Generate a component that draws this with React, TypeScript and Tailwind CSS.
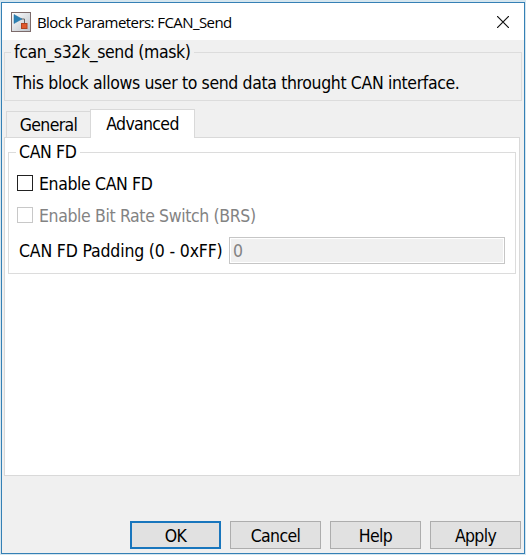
import type { ReactNode } from "react";

function BlockIcon() {
  return (
    <svg width="20" height="20" viewBox="0 0 20 20" className="block shrink-0">
      <defs>
        <linearGradient id="face" x1="0" y1="0" x2="1" y2="1">
          <stop offset="0" stopColor="#ffffff" />
          <stop offset="1" stopColor="#bcc3ca" />
        </linearGradient>
      </defs>
      <rect x="0.5" y="0.5" width="19" height="19" fill="url(#face)" stroke="#7c6b6b" />
      <path d="M10 7h3.5v4" fill="none" stroke="#666" strokeWidth="1" />
      <path d="M3 2.5L11 7L3 11.5Z" fill="#2b80b3" stroke="#2470a0" strokeWidth="0.5" />
      <rect x="10.5" y="11.5" width="5.5" height="5" fill="#e0592c" stroke="#b04420" />
    </svg>
  );
}

function Checkbox({ label, disabled }: { label: ReactNode; disabled?: boolean }) {
  return (
    <label className={`flex h-6 items-center ${disabled ? "text-[#838383]" : "text-black"}`}>
      <span className={`mr-[6px] size-4 shrink-0 border bg-white ${disabled ? "border-[#c8c8c8]" : "border-[#222]"}`} />
      {label}
    </label>
  );
}

function Button({ children, primary }: { children: ReactNode; primary?: boolean }) {
  return (
    <button
      className={`flex h-[28px] w-[91px] items-center justify-center bg-[#e1e1e1] pt-px tracking-[-0.65px] ${
        primary ? "border-2 border-[#1976bd]" : "border border-[#adadad]"
      }`}
    >
      {children}
    </button>
  );
}

export default function App() {
  return (
    <div className="h-[555px] w-[526px] overflow-hidden bg-[#d5e6ef] pl-px pt-[2px] font-['DejaVu_Sans_Condensed','DejaVu_Sans',sans-serif] text-[17.5px] leading-6 tracking-[-0.37px] whitespace-nowrap text-black">
      <div className="flex h-[552px] w-[524px] flex-col border border-[#3580b5] bg-[#f0f0f0]">
        <header className="flex h-[37px] shrink-0 items-center bg-white pl-[9px] pr-[15px] font-['Open_Sans',sans-serif] text-[15px] tracking-[-0.57px]">
          <BlockIcon />
          <span className="ml-[6px]">Block Parameters: FCAN_Send</span>
          <svg width="12" height="12" viewBox="0 0 12 12" className="ml-auto" stroke="#111" strokeWidth="1.2">
            <path d="M0 0L12 12M12 0L0 12" />
          </svg>
        </header>

        <fieldset className="ml-[2px] h-[61px] w-[518px] shrink-0 border border-[#dcdcdc]">
          <legend className="ml-[6px] h-6 px-[3px]">fcan_s32k_send (mask)</legend>
          <p className="pl-2 pt-[7px]">This block allows user to send data throught CAN interface.</p>
        </fieldset>

        <nav className="mt-[8px] flex h-[28px] shrink-0 items-end pl-1 tracking-[-0.65px]">
          <div className="flex h-[26px] w-[84px] items-center justify-center border border-b-0 border-r-0 border-[#d9d9d9]">General</div>
          <div className="relative z-10 -mb-px flex h-[29px] w-[105px] items-center justify-center border border-b-0 border-[#d9d9d9] bg-white">Advanced</div>
        </nav>

        <main className="ml-[2px] h-[339px] w-[516px] shrink-0 border border-[#d9d9d9] bg-white pl-[3px] pt-[2px]">
          <fieldset className="h-[134px] w-[508px] border border-[#dcdcdc]">
            <legend className="ml-[7px] h-6 px-[3px]">CAN FD</legend>
            <div className="flex flex-col gap-2 pl-2 pt-[7px]">
              <Checkbox label={<span className="pt-[2px]">Enable CAN FD</span>} />
              <Checkbox disabled label={<span className="pt-[2px]">Enable Bit Rate Switch (BRS)</span>} />
            </div>
            <div className="mt-[10px] flex h-[27px] items-center pl-[10px]">
              <span className="w-[210px] tracking-[-0.17px]">CAN FD Padding (0 - 0xFF)</span>
              <div className="flex h-[27px] w-[276px] items-center border border-[#c6c6c6] bg-[#f0f0f0] pl-[3px] text-[#838383] shadow-[inset_0_0_0_1px_#fff]">0</div>
            </div>
          </fieldset>
        </main>

        <footer className="mt-[45px] flex gap-[9px] pl-[128px]">
          <Button primary>OK</Button>
          <Button>Cancel</Button>
          <Button>Help</Button>
          <Button>Apply</Button>
        </footer>
      </div>
    </div>
  );
}
